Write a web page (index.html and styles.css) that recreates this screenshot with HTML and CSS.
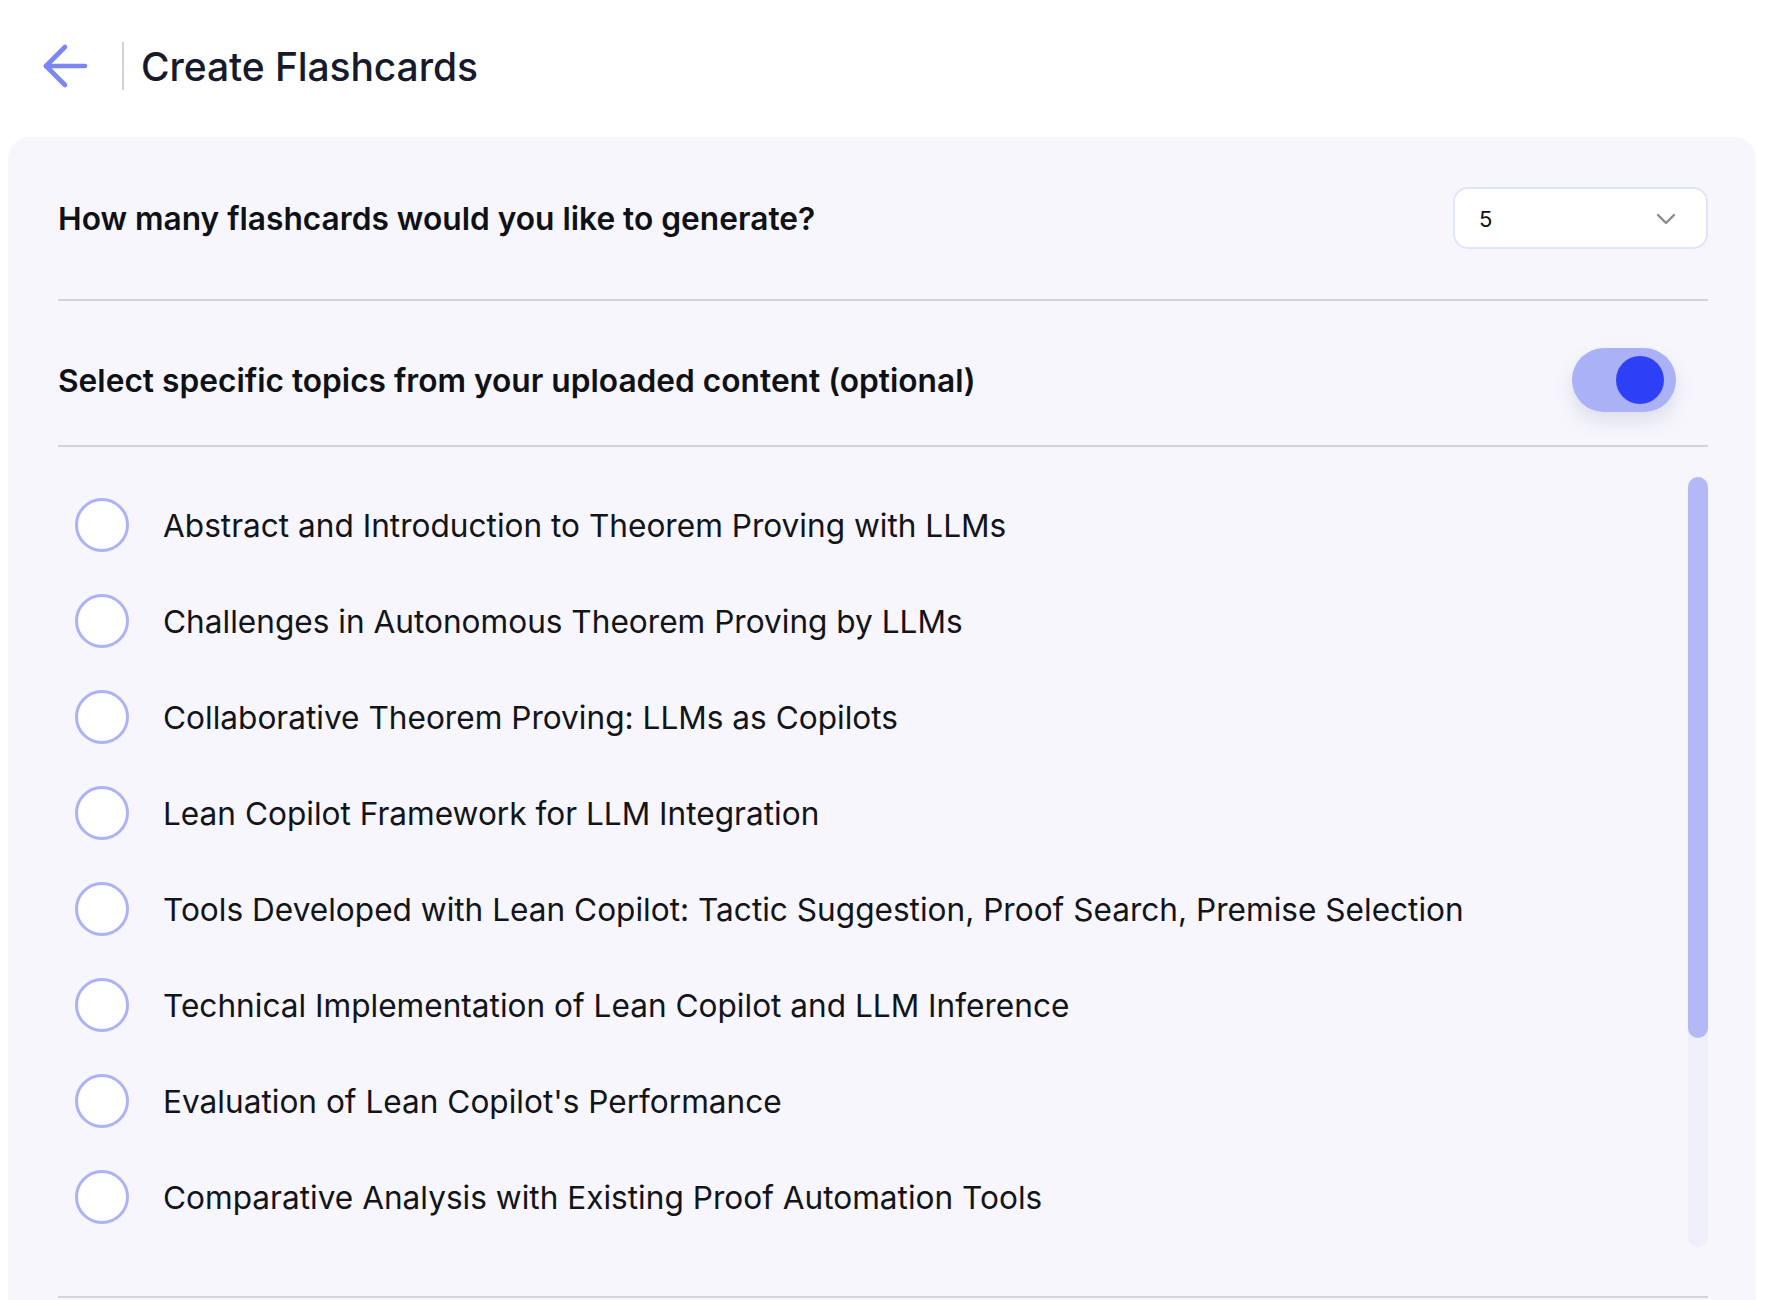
FILE: index.html
```html
<!DOCTYPE html>
<html lang="en">
<head>
<meta charset="utf-8">
<title>Create Flashcards</title>
<link rel="stylesheet" href="styles.css">
</head>
<body>
<header class="header">
  <button class="back" aria-label="Back">
    <svg width="48" height="48" viewBox="0 0 48 48" fill="none" stroke="#7b85f4" stroke-width="4.6" stroke-linecap="round" stroke-linejoin="round">
      <path d="M44 24H5"/>
      <path d="M24 5L5 24L24 43"/>
    </svg>
  </button>
  <span class="vdivider"></span>
  <h1 class="title">Create Flashcards</h1>
</header>

<main class="card">
  <section class="row row-count">
    <h2 class="question">How many flashcards would you like to generate?</h2>
    <div class="select">
      <span class="select-value">5</span>
      <svg class="chevron" width="20" height="12" viewBox="0 0 20 12" fill="none" stroke="#8b8b8e" stroke-width="2.4" stroke-linecap="round" stroke-linejoin="round">
        <path d="M2 2l8 8 8-8"/>
      </svg>
    </div>
  </section>
  <hr class="divider">
  <section class="row row-topics">
    <h2 class="question">Select specific topics from your uploaded content (optional)</h2>
    <div class="toggle"><span class="knob"></span></div>
  </section>
  <hr class="divider">
  <div class="topics-wrap">
    <ul class="topics">
      <li class="topic"><span class="radio"></span><span class="label">Abstract and Introduction to Theorem Proving with LLMs</span></li>
      <li class="topic"><span class="radio"></span><span class="label">Challenges in Autonomous Theorem Proving by LLMs</span></li>
      <li class="topic"><span class="radio"></span><span class="label">Collaborative Theorem Proving: LLMs as Copilots</span></li>
      <li class="topic"><span class="radio"></span><span class="label">Lean Copilot Framework for LLM Integration</span></li>
      <li class="topic"><span class="radio"></span><span class="label">Tools Developed with Lean Copilot: Tactic Suggestion, Proof Search, Premise Selection</span></li>
      <li class="topic"><span class="radio"></span><span class="label">Technical Implementation of Lean Copilot and LLM Inference</span></li>
      <li class="topic"><span class="radio"></span><span class="label">Evaluation of Lean Copilot's Performance</span></li>
      <li class="topic"><span class="radio"></span><span class="label">Comparative Analysis with Existing Proof Automation Tools</span></li>
    </ul>
    <div class="scrollbar"><div class="thumb"></div></div>
  </div>
  <hr class="divider">
  <div class="spacer"></div>
</main>
</body>
</html>
```

FILE: styles.css
```css
* { box-sizing: border-box; }

html, body {
  margin: 0;
  padding: 0;
  background: #ffffff;
  font-family: Inter, "Noto Sans", "Liberation Sans", sans-serif;
  color: #111318;
}

.header {
  display: flex;
  align-items: center;
  padding: 42px 0 47px 41px;
}

.back {
  display: flex;
  width: 48px;
  height: 48px;
  padding: 0;
  border: 0;
  background: none;
}

.vdivider {
  width: 2px;
  height: 48px;
  margin-left: 33px;
  background: #d3d3d6;
}

.title {
  margin: 0 0 0 17px;
  font-size: 39px;
  font-weight: 500;
  color: #161a2c;
  letter-spacing: -0.1px;
}

.card {
  margin: 0 10px 0 8px;
  padding: 0 48px 0 50px;
  background: #f6f6fc;
  border-radius: 22px 22px 0 0;
  min-height: 1163px;
}

.row {
  display: flex;
  align-items: center;
  justify-content: space-between;
}

.row-count { padding: 50px 0; }

.row-topics { padding: 47px 32px 33px 0; }

.question {
  margin: 0;
  font-size: 31.7px;
  font-weight: 600;
  color: #0f1115;
}

.select {
  display: flex;
  align-items: center;
  justify-content: space-between;
  width: 255px;
  height: 62px;
  padding: 2px 30px 0 24px;
  background: #ffffff;
  border: 2px solid #e1e5fb;
  border-radius: 15px;
}

.select-value {
  font-size: 22px;
  color: #111;
}

.toggle {
  position: relative;
  width: 104px;
  height: 64px;
  border-radius: 32px;
  background: #aab1f6;
  box-shadow: 0 10px 18px rgba(120, 120, 170, 0.18);
}

.knob {
  position: absolute;
  top: 8px;
  right: 12px;
  width: 48px;
  height: 48px;
  border-radius: 50%;
  background: #2e40f5;
}

.divider {
  margin: 0;
  height: 2px;
  border: 0;
  background: #d4d5dc;
}

.topics-wrap {
  display: flex;
  margin: 30px 0 49px;
  height: 770px;
}

.topics {
  flex: 1;
  list-style: none;
  margin: 0;
  padding: 0;
  overflow: hidden;
}

.scrollbar {
  flex: none;
  width: 20px;
  height: 100%;
  border-radius: 10px;
  background: #efeff9;
}

.thumb {
  height: 561px;
  border-radius: 10px;
  background: #b3b8f7;
}

.topic {
  display: flex;
  align-items: center;
  height: 96px;
  padding-left: 17px;
}

.radio {
  flex: none;
  width: 54px;
  height: 54px;
  border: 3px solid #aab2f8;
  border-radius: 50%;
  background: #ffffff;
}

.label {
  margin-left: 34px;
  font-size: 31.6px;
  font-weight: 400;
  color: #131418;
}

.spacer { height: 40px; }
```
